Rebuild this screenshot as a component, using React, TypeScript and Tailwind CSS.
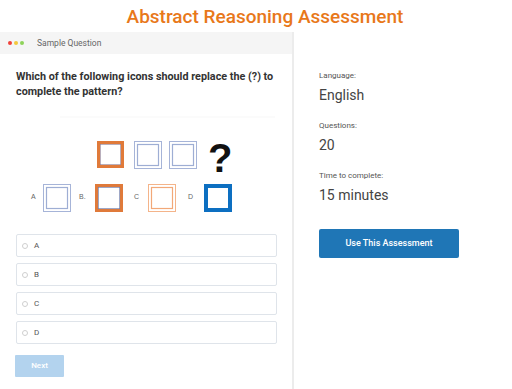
import React from "react";

function Figure() {
  return (
    <svg width="293" height="110" viewBox="0 110 293 110" className="block">
      <line x1="60" y1="117" x2="275" y2="117" stroke="#f7f7f7" strokeWidth="1" />
      {/* top row */}
      <rect x="98.5" y="142.5" width="24" height="24" fill="none" stroke="#e07a3a" strokeWidth="3" />
      <rect x="100.3" y="144.3" width="20.4" height="20.4" fill="none" stroke="#8a7a90" strokeWidth="0.6" />
      <rect x="134.5" y="141.5" width="27" height="27" fill="none" stroke="#a6b4d8" strokeWidth="1" />
      <rect x="137.5" y="144.5" width="21" height="21" fill="none" stroke="#9eaed4" strokeWidth="1.2" />
      <rect x="169.5" y="141.5" width="27" height="27" fill="none" stroke="#a6b4d8" strokeWidth="1" />
      <rect x="172.5" y="144.5" width="21" height="21" fill="none" stroke="#9eaed4" strokeWidth="1.2" />
      <text x="208" y="172" fontFamily="Liberation Sans, Arial, sans-serif" fontWeight="700" fontSize="40" fill="#111">?</text>
      {/* bottom row */}
      <text x="31" y="199" fontFamily="Liberation Sans, Arial, sans-serif" fontSize="7" fill="#666">A</text>
      <rect x="43.5" y="184.5" width="27" height="27" fill="none" stroke="#a6b4d8" strokeWidth="1" />
      <rect x="46.5" y="187.5" width="21" height="21" fill="none" stroke="#9eaed4" strokeWidth="1.2" />
      <text x="79" y="199" fontFamily="Liberation Sans, Arial, sans-serif" fontSize="7" fill="#666">B.</text>
      <rect x="96.5" y="185.5" width="25" height="25" fill="none" stroke="#e07a3a" strokeWidth="3" />
      <rect x="98.3" y="187.3" width="21.4" height="21.4" fill="none" stroke="#6a78a8" strokeWidth="0.7" />
      <text x="134" y="199" fontFamily="Liberation Sans, Arial, sans-serif" fontSize="7" fill="#666">C</text>
      <rect x="148.5" y="184.5" width="27" height="27" fill="none" stroke="#f4b48a" strokeWidth="1" />
      <rect x="151.5" y="187.5" width="21" height="21" fill="none" stroke="#f2a878" strokeWidth="1.2" />
      <text x="188" y="199" fontFamily="Liberation Sans, Arial, sans-serif" fontSize="7" fill="#666">D</text>
      <rect x="206" y="186" width="24" height="24" fill="none" stroke="#0d6fc1" strokeWidth="4" />
    </svg>
  );
}

export default function App() {
  const opts = ["A", "B", "C", "D"];
  return (
    <div className="w-[512px] h-[389px] bg-white overflow-hidden" style={{ fontFamily: "Roboto, 'Liberation Sans', sans-serif" }}>
      <div className="h-[32px] flex items-center justify-center pl-[18px]">
        <h1 className="text-[19px] leading-none text-[#e8781a] font-medium">Abstract Reasoning Assessment</h1>
      </div>
      <div className="flex h-[357px]">
        <div className="w-[294px] shrink-0 border-r-2 border-[#ececec] flex flex-col">
          <div className="h-[22px] bg-[#f5f5f5] flex items-center pl-[8px]">
            <span className="w-[4px] h-[4px] rounded-full bg-[#f0413a]" />
            <span className="w-[4px] h-[4px] rounded-full bg-[#f3c83c] ml-[2px]" />
            <span className="w-[4px] h-[4px] rounded-full bg-[#8ed35a] ml-[2px]" />
            <span className="ml-[13px] text-[8.5px] text-[#666]">Sample Question</span>
          </div>
          <div className="pt-[15px] pl-[16px]">
            <p className="text-[10.8px] leading-[15px] font-bold text-[#333] whitespace-nowrap">
              Which of the following icons should replace the (?) to<br />complete the pattern?
            </p>
          </div>
          <div className="mt-[11px]">
            <Figure />
          </div>
          <div className="mt-[14px] pl-[16px] pr-[16px] flex flex-col gap-[6px]">
            {opts.map((o) => (
              <div key={o} className="h-[23px] w-[261px] border border-[#dfe4ea] rounded-[2px] flex items-center pl-[5px]">
                <span className="w-[6px] h-[6px] rounded-full border border-[#cfcfcf]" />
                <span className="ml-[6px] text-[8px] text-[#555]">{o}</span>
              </div>
            ))}
          </div>
          <div className="pl-[15px] mt-[7px]">
            <button className="w-[49px] h-[22px] bg-[#b3d3ee] text-white text-[8px] font-medium rounded-[1px]">Next</button>
          </div>
        </div>
        <div className="pl-[25px] pt-[39px] flex flex-col">
          <div className="text-[8px] text-[#555] leading-[10px]">Language:</div>
          <div className="text-[14px] text-[#444] leading-[16px] mt-[6px]">English</div>
          <div className="text-[8px] text-[#555] leading-[10px] mt-[18px]">Questions:</div>
          <div className="text-[14px] text-[#444] leading-[16px] mt-[6px]">20</div>
          <div className="text-[8px] text-[#555] leading-[10px] mt-[18px]">Time to complete:</div>
          <div className="text-[14px] text-[#444] leading-[16px] mt-[6px]">15 minutes</div>
          <button className="mt-[26px] w-[140px] h-[29px] bg-[#1f76b6] text-white text-[9px] font-medium rounded-[2px]">Use This Assessment</button>
        </div>
      </div>
    </div>
  );
}
